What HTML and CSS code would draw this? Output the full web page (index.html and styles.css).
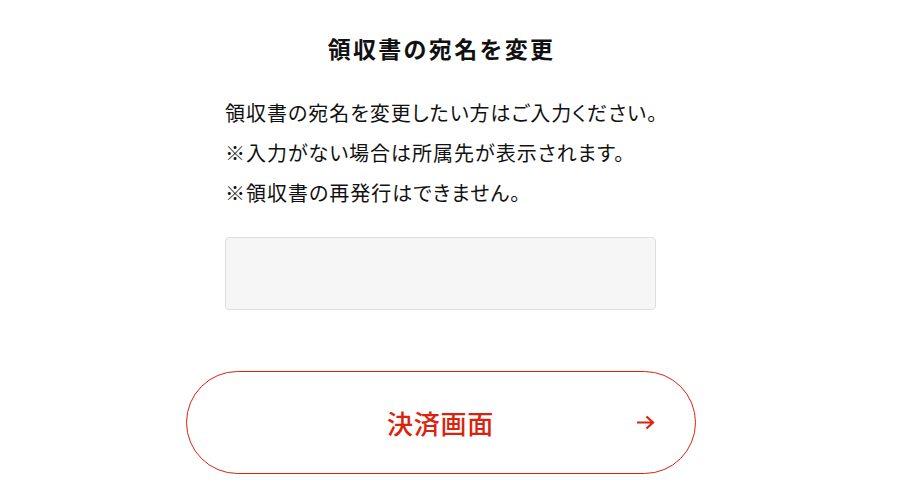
FILE: index.html
```html
<!DOCTYPE html>
<html lang="ja">
<head>
    <meta charset="UTF-8">
    <meta name="viewport" content="width=device-width, initial-scale=1.0">
    <title>領収書の宛名を変更</title>
    <link rel="stylesheet" href="styles.css">
</head>
<body>
<div class="wrap">
    <h2 class="title">領収書の宛名を変更</h2>
    <div class="notes">
        <p>領収書の宛名を変更したい方はご入力ください。</p>
        <p>※入力がない場合は所属先が表示されます。</p>
        <p>※領収書の再発行はできません。</p>
    </div>
    <input type="text" class="name-input">
    <button class="pay-btn">
        <span class="pay-label">決済画面</span>
        <svg class="pay-arrow" width="19" height="15" viewBox="0 0 19 15">
            <path d="M1 7.5H17M10.5 1.5L17 7.5L10.5 13.5" fill="none" stroke="#d9230f" stroke-width="2.2"/>
        </svg>
    </button>
</div>
</body>
</html>
```

FILE: styles.css
```css
body {
    font-family: "Noto Sans CJK JP", "Noto Sans", sans-serif;
    background-color: #fff;
    color: #111;
    margin: 0;
    padding: 0 19px 0 0;
}
.wrap {
    width: 510px;
    margin: 0 auto;
    display: flex;
    flex-direction: column;
    align-items: center;
}
.title {
    font-size: 23px;
    font-weight: bold;
    letter-spacing: 0.1em;
    margin: 30px 0 0 2px;
    line-height: 36px;
}
.notes {
    width: 431px;
    margin-top: 27px;
}
.notes p {
    font-size: 20px;
    line-height: 40px;
    letter-spacing: 0.05em;
    font-feature-settings: "palt";
    margin: 0;
    white-space: nowrap;
}
.name-input {
    box-sizing: border-box;
    width: 431px;
    height: 73px;
    margin-top: 24px;
    background-color: #f6f6f6;
    border: 1px solid #dedede;
    border-radius: 4px;
    font-size: 18px;
}
.pay-btn {
    box-sizing: border-box;
    position: relative;
    width: 510px;
    height: 103px;
    margin-top: 61px;
    background: #fff;
    border: 1px solid #d9230f;
    border-radius: 52px;
    color: #d9230f;
    font-family: inherit;
    font-size: 26px;
    font-weight: 500;
    letter-spacing: 0.03em;
    cursor: pointer;
}
.pay-arrow {
    position: absolute;
    right: 40px;
    top: 43px;
}
```
